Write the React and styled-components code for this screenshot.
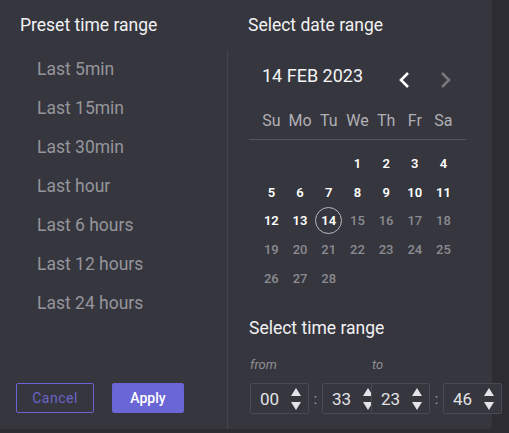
import { createGlobalStyle } from 'styled-components'
import styled from 'styled-components'

const GlobalStyle = createGlobalStyle`
	html, body {
		margin: 0;
		padding: 0;
		background: #2c2c32;
		font-family: Roboto, "Liberation Sans", sans-serif;
	}
`

const Panel = styled.div`
	display: flex;
	width: 492px;
	height: 429px;
	background: #36363e;
	border-bottom-right-radius: 4px;
	overflow: visible;
`
const LeftCol = styled.div`
	width: 228px;
	flex-shrink: 0;
	display: flex;
	flex-direction: column;
`
const RightCol = styled.div`
	flex: 1;
	min-width: 0;
	display: flex;
	flex-direction: column;
	padding-left: 20px;
`
const Title = styled.div`
	line-height: 50px;
	height: 50px;
	font-size: 17.5px;
	font-weight: 400;
	color: #f2f2f4;
	white-space: nowrap;
	padding-left: ${p => p.indent || 0}px;
`
const LeftBody = styled.div`
	flex: 1;
	display: flex;
	flex-direction: column;
	border-right: 1px solid #44444c;
	padding-bottom: 16px;
`
const Preset = styled.div`
	line-height: 39px;
	font-size: 17.5px;
	color: #95959b;
	padding-left: 37px;
	cursor: pointer;
`
const Buttons = styled.div`
	margin-top: auto;
	display: flex;
	gap: 18px;
	padding-left: 16px;
`
const Button = styled.button`
	width: ${p => p.w}px;
	height: 30px;
	font-family: inherit;
	font-size: 14px;
	border-radius: 2px;
	cursor: pointer;
	border: 1px solid #6a63d2;
	background: ${p => (p.primary ? '#6b66d6' : 'transparent')};
	color: ${p => (p.primary ? '#ffffff' : '#6a64c8')};
	font-weight: ${p => (p.primary ? 500 : 400)};
	letter-spacing: ${p => (p.primary ? 0 : 0.5)}px;
`
const CalHeader = styled.div`
	height: 50px;
	display: flex;
	align-items: center;
	padding-left: 14px;
`
const MonthLabel = styled.div`
	font-size: 18px;
	font-weight: 400;
	color: #f4f4f6;
	width: 136px;
	white-space: nowrap;
`
const NavBtn = styled.span`
	display: flex;
	margin-top: 10px;
	margin-right: 26px;
`
const WeekRow = styled.div`
	width: 217px;
	height: 40px;
	border-bottom: 1px solid #55555c;
	margin-left: 1px;
	box-sizing: border-box;
	padding: 11px 0 0 8px;
`
const Grid = styled.div`
	display: grid;
	grid-template-columns: repeat(7, 28.7px);
	grid-auto-rows: 28.7px;
	margin-left: ${p => p.ml || 0}px;
`
const WeekDay = styled.div`
	font-size: 16px;
	color: #b0b0b5;
	text-align: center;
	line-height: 20px;
`
const Day = styled.div`
	display: flex;
	align-items: center;
	justify-content: center;
	font-size: 13px;
	font-weight: ${p => (p.active ? 600 : 500)};
	color: ${p => (p.active ? '#ffffff' : '#8b8b91')};
`
const Today = styled.span`
	width: 25px;
	height: 25px;
	border-radius: 50%;
	border: 1px solid #b9b9be;
	display: flex;
	align-items: center;
	justify-content: center;
`
const TimeTitle = styled.div`
	margin-top: 26px;
	line-height: 20px;
	font-size: 17.5px;
	font-weight: 400;
	color: #f2f2f4;
	margin-left: 1px;
	white-space: nowrap;
`
const Groups = styled.div`
	display: flex;
	margin-top: 19px;
	margin-left: 2px;
`
const Group = styled.div`
	width: ${p => p.w}px;
	flex-shrink: 0;
	display: flex;
	flex-direction: column;
`
const Label = styled.div`
	font-size: 13px;
	font-style: italic;
	color: #8f8f95;
	line-height: 16px;
	padding-left: ${p => p.indent || 0}px;
`
const TimeRow = styled.div`
	display: flex;
	align-items: center;
	margin-top: 10px;
`
const TimeBox = styled.div`
	width: 59px;
	height: 31px;
	flex-shrink: 0;
	box-sizing: border-box;
	border: 1px solid #4a4a52;
	border-radius: 2px;
	background: #36363e;
	display: flex;
	align-items: center;
	padding-left: 9px;
	font-size: 17px;
	color: #e2e2e6;
`
const Spin = styled.svg`
	margin-left: auto;
	margin-right: 7px;
`
const Colon = styled.span`
	width: 13px;
	flex-shrink: 0;
	text-align: center;
	color: #a9a9ae;
	font-size: 14px;
`

const Chevron = ({ dir, color }) => (
	<svg width="14" height="18" viewBox="0 0 14 18">
		<path
			d={dir === 'left' ? 'M10 2 L3 9 L10 16' : 'M4 2 L11 9 L4 16'}
			fill="none"
			stroke={color}
			strokeWidth="2.6"
		/>
	</svg>
)

const Spinner = () => (
	<Spin width="10" height="22" viewBox="0 0 10 22">
		<path d="M5 0 L10 8 L0 8 Z" fill="#e4e4e8" />
		<path d="M0 14 L10 14 L5 22 Z" fill="#e4e4e8" />
	</Spin>
)

const presets = ['Last 5min', 'Last 15min', 'Last 30min', 'Last hour', 'Last 6 hours', 'Last 12 hours', 'Last 24 hours']
const weekDays = ['Su', 'Mo', 'Tu', 'We', 'Th', 'Fr', 'Sa']

function Field({ value }) {
	return (
		<TimeBox>
			{value}
			<Spinner />
		</TimeBox>
	)
}

export default function App() {
	const days = []
	for (let i = 0; i < 3; i++) days.push(null)
	for (let d = 1; d <= 28; d++) days.push(d)
	return (
		<>
			<GlobalStyle />
			<Panel>
				<LeftCol>
					<Title indent={20}>Preset time range</Title>
					<LeftBody>
						{presets.map(p => (
							<Preset key={p}>{p}</Preset>
						))}
						<Buttons>
							<Button w={78}>Cancel</Button>
							<Button w={72} primary>Apply</Button>
						</Buttons>
					</LeftBody>
				</LeftCol>
				<RightCol>
					<Title>Select date range</Title>
					<CalHeader>
						<MonthLabel>14 FEB 2023</MonthLabel>
						<NavBtn>
							<Chevron dir="left" color="#ffffff" />
						</NavBtn>
						<NavBtn>
							<Chevron dir="right" color="#77777d" />
						</NavBtn>
					</CalHeader>
					<WeekRow>
						<Grid>
							{weekDays.map(w => (
								<WeekDay key={w}>{w}</WeekDay>
							))}
						</Grid>
					</WeekRow>
					<Grid ml={9} style={{ marginTop: 9 }}>
						{days.map((d, i) => (
							<Day key={i} active={d !== null && d <= 14}>
								{d === 14 ? <Today>{d}</Today> : d}
							</Day>
						))}
					</Grid>
					<TimeTitle>Select time range</TimeTitle>
					<Groups>
						<Group w={121}>
							<Label>from</Label>
							<TimeRow>
								<Field value="00" />
								<Colon>:</Colon>
								<Field value="33" />
							</TimeRow>
						</Group>
						<Group w={134}>
							<Label indent={1}>to</Label>
							<TimeRow>
								<Field value="23" />
								<Colon>:</Colon>
								<Field value="46" />
							</TimeRow>
						</Group>
					</Groups>
				</RightCol>
			</Panel>
		</>
	)
}
